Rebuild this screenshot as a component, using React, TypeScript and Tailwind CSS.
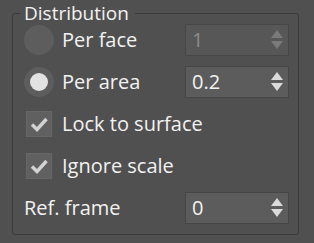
import React from "react";

type SpinProps = { value: string; disabled?: boolean };

const Spinner: React.FC<SpinProps> = ({ value, disabled }) => (
  <div
    className={`ml-auto flex h-8 w-[104px] items-center justify-between border border-[#464646] pl-[6px] pr-[5px] ${
      disabled ? "bg-[#575757] text-[#8c8c8c]" : "bg-[#5c5c5c] text-[#f2f2f2]"
    }`}
  >
    <span className="leading-none">{value}</span>
    <svg width="12" height="20" viewBox="0 0 12 20" className={disabled ? "fill-[#7a7a7a]" : "fill-[#dadada]"}>
      <polygon points="6,0 12,8 0,8" />
      <polygon points="0,11 12,11 6,19" />
    </svg>
  </div>
);

const Radio: React.FC<{ checked?: boolean }> = ({ checked }) => (
  <div className="flex h-[30px] w-[30px] items-center justify-center rounded-full bg-[#5d5d5d]">
    {checked && <div className="h-[18px] w-[18px] rounded-full bg-[#e2e2e2]" />}
  </div>
);

const Check: React.FC = () => (
  <div className="flex w-[30px] justify-center">
    <div className="flex h-[26px] w-[26px] items-center justify-center border border-[#666] bg-[#606060]">
      <svg width="18" height="15" viewBox="0 0 18 15">
        <polyline points="2,7.5 7,12.5 16.5,2" fill="none" stroke="#d2d2d2" strokeWidth="3.4" />
      </svg>
    </div>
  </div>
);

export default function App() {
  return (
    <div
      className="h-[243px] w-[314px] bg-[#505050] pl-3 pr-[15px] pt-px text-[20px] text-[#f2f2f2]"
      style={{ fontFamily: '"Open Sans", "Noto Sans", sans-serif' }}
    >
      <fieldset className="rounded-[3px] border border-[#3a3a3a] pb-[10px] pl-[11px] pr-[9px]">
        <legend className="-ml-[4px] pl-1 pr-[6px] text-[19px] leading-6">Distribution</legend>
        <div className="-mt-px flex flex-col gap-[10px]">
          <div className="flex h-8 items-center gap-2">
            <Radio />
            <span>Per face</span>
            <Spinner value="1" disabled />
          </div>
          <div className="flex h-8 items-center gap-2">
            <Radio checked />
            <span>Per area</span>
            <Spinner value="0.2" />
          </div>
          <div className="flex h-8 items-center gap-2">
            <Check />
            <span>Lock to surface</span>
          </div>
          <div className="flex h-8 items-center gap-2">
            <Check />
            <span>Ignore scale</span>
          </div>
          <div className="flex h-8 items-center">
            <span>Ref. frame</span>
            <Spinner value="0" />
          </div>
        </div>
      </fieldset>
    </div>
  );
}
